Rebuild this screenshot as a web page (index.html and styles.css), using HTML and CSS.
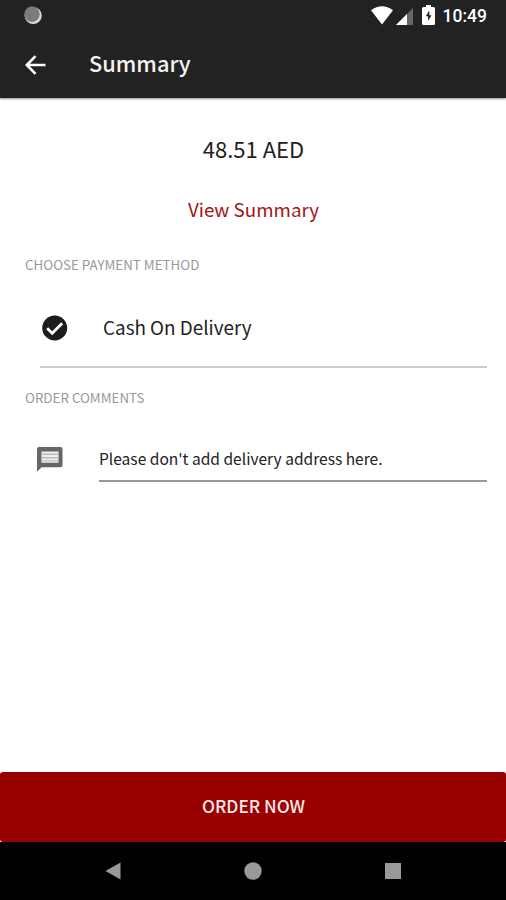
FILE: index.html
```html
<!DOCTYPE html>
<html lang="en">
<head>
<meta charset="utf-8">
<title>Summary</title>
<link rel="stylesheet" href="styles.css">
</head>
<body>
<div class="screen">
  <header class="header">
    <div class="status">
      <svg class="status-dot" width="20" height="20" viewBox="0 0 20 20"><circle cx="10.2" cy="9.500" r="8.600" fill="#d8d8d8"/><circle cx="9" cy="8.300" r="7.700" fill="#7c7c7c"/></svg>
      <svg class="wifi" width="22" height="19" viewBox="0 0 22 19"><path d="M0 4.300Q11-4 22 4.300L11 18.500Z" fill="#fff"/></svg>
      <svg class="signal" width="17" height="17" viewBox="0 0 17 18" preserveAspectRatio="none"><path d="M17 0V18H0Z" fill="#666"/><path d="M11 6.400V18H0Z" fill="#fff"/></svg>
      <svg class="battery" width="13" height="20" viewBox="0 0 13 20"><path d="M4 0h5v2h2.500Q13 2 13 3.500v15q0 1.500-1.500 1.500h-10Q0 20 0 18.500v-15Q0 2 1.500 2H4Z" fill="#fff"/><path d="M7.300 5.500 3.800 11.300h2.300V16l3.400-5.700H7.300Z" fill="#222"/></svg>
      <span class="clock">10:49</span>
    </div>
    <div class="toolbar">
      <svg class="back" width="21" height="20" viewBox="0 0 21 20"><path d="M20.500 10H2M10.500 1.200 1.800 10l8.700 8.800" fill="none" stroke="#fff" stroke-width="2.600"/></svg>
      <h1 class="title">Summary</h1>
    </div>
  </header>
  <main class="content">
    <div class="amount">48.51 AED</div>
    <a class="view">View Summary</a>
    <h2 class="label">CHOOSE PAYMENT METHOD</h2>
    <div class="method">
      <svg class="check" width="26" height="26" viewBox="0 0 26 26"><circle cx="12.700" cy="13" r="12.500" fill="#1c1c1e"/><path d="m5.200 13.300 5 5L20.200 8.300" fill="none" stroke="#fff" stroke-width="2.700"/></svg>
      <span class="method-name">Cash On Delivery</span>
    </div>
    <h2 class="label comments-label">ORDER COMMENTS</h2>
    <div class="comment">
      <svg class="bubble" width="26" height="25" viewBox="0 0 26 25"><path d="M2 0h21.500Q25.500 0 25.500 2v16.200q0 2-2 2H4.700L0 24.800V2Q0 0 2 0Z" fill="#666"/><path d="M4.500 4.500h17v11.200h-17z" fill="#eee"/><path d="M4.500 6.500h17v1.500h-17zm0 3.500h17v1.500h-17zm0 3.200h17v1h-17z" fill="#bbb"/></svg>
      <div class="field">Please don't add delivery address here.</div>
    </div>
  </main>
  <button class="order">ORDER NOW</button>
  <nav class="nav">
    <svg width="16" height="18" viewBox="0 0 16 18"><path d="M15.500.5v17L.5 9Z" fill="#999"/></svg>
    <svg width="18" height="18" viewBox="0 0 18 18"><circle cx="9" cy="9" r="8.700" fill="#999"/></svg>
    <svg width="16" height="16" viewBox="0 0 16 16"><path d="M0 0h16v16H0z" fill="#999"/></svg>
  </nav>
</div>
</body>
</html>
```
FILE: styles.css
```css
* { box-sizing: border-box; }
body {
  margin: 0;
  font-family: "Noto Sans CJK SC", "Noto Sans", sans-serif;
  background: #fff;
  color: #222;
}
svg { display: block; flex: none; }
.screen { width: 506px; height: 900px; display: flex; flex-direction: column; overflow: hidden; }
.header { height: 98px; flex: none; background: #222; box-shadow: 0 1px 2px rgba(0, 0, 0, .45); color: #fff; }
.status { height: 32px; display: flex; align-items: center; padding: 0 19px 0 23px; }
.wifi { margin: 0 0 2px auto; }
.signal { margin: 1px 9px 0 3px; }
.battery { margin: 0 8px 2px 0; }
.clock { font: 500 17.500px/32px Roboto, sans-serif; }
.toolbar { height: 66px; display: flex; align-items: center; padding-left: 25px; }
.title { margin: 0 0 4px 43px; font-size: 21.800px; line-height: 32px; font-weight: 500; color: #f4f4f4; }
.content { flex: 1; padding: 0 19px 0 25px; }
.amount, .view { display: block; line-height: 32px; text-align: center; margin-right: 5px; }
.amount { margin-top: 34px; font-size: 22px; }
.view { margin-top: 29px; font-size: 18.750px; color: #a31515; }
.label { margin: 30px 0 0; font-size: 13.350px; line-height: 20px; font-weight: 400; color: #999; }
.method { height: 93px; margin-left: 15px; padding: 15px 0 0 2px; display: flex; align-items: center; border-bottom: 2px solid #ccc; }
.method-name { margin: 0 0 2px 35px; font-size: 18.850px; line-height: 30px; }
.comments-label { margin-top: 20px; }
.comment { display: flex; align-items: flex-start; margin-top: 27px; padding-left: 12px; }
.bubble { margin-top: 12px; }
.field { flex: 1; height: 47px; margin-left: 36px; font-size: 15.550px; line-height: 46px; border-bottom: 2px solid #999; }
.order { height: 70px; flex: none; border: 0; border-radius: 3px; background: #900; color: #f8e8e8; font: 500 17.300px/66px "Noto Sans CJK SC", sans-serif; padding: 0 0 2px 1px; }
.nav { height: 58px; flex: none; background: #000; display: flex; align-items: center; justify-content: space-between; padding: 0 105px; }
```
